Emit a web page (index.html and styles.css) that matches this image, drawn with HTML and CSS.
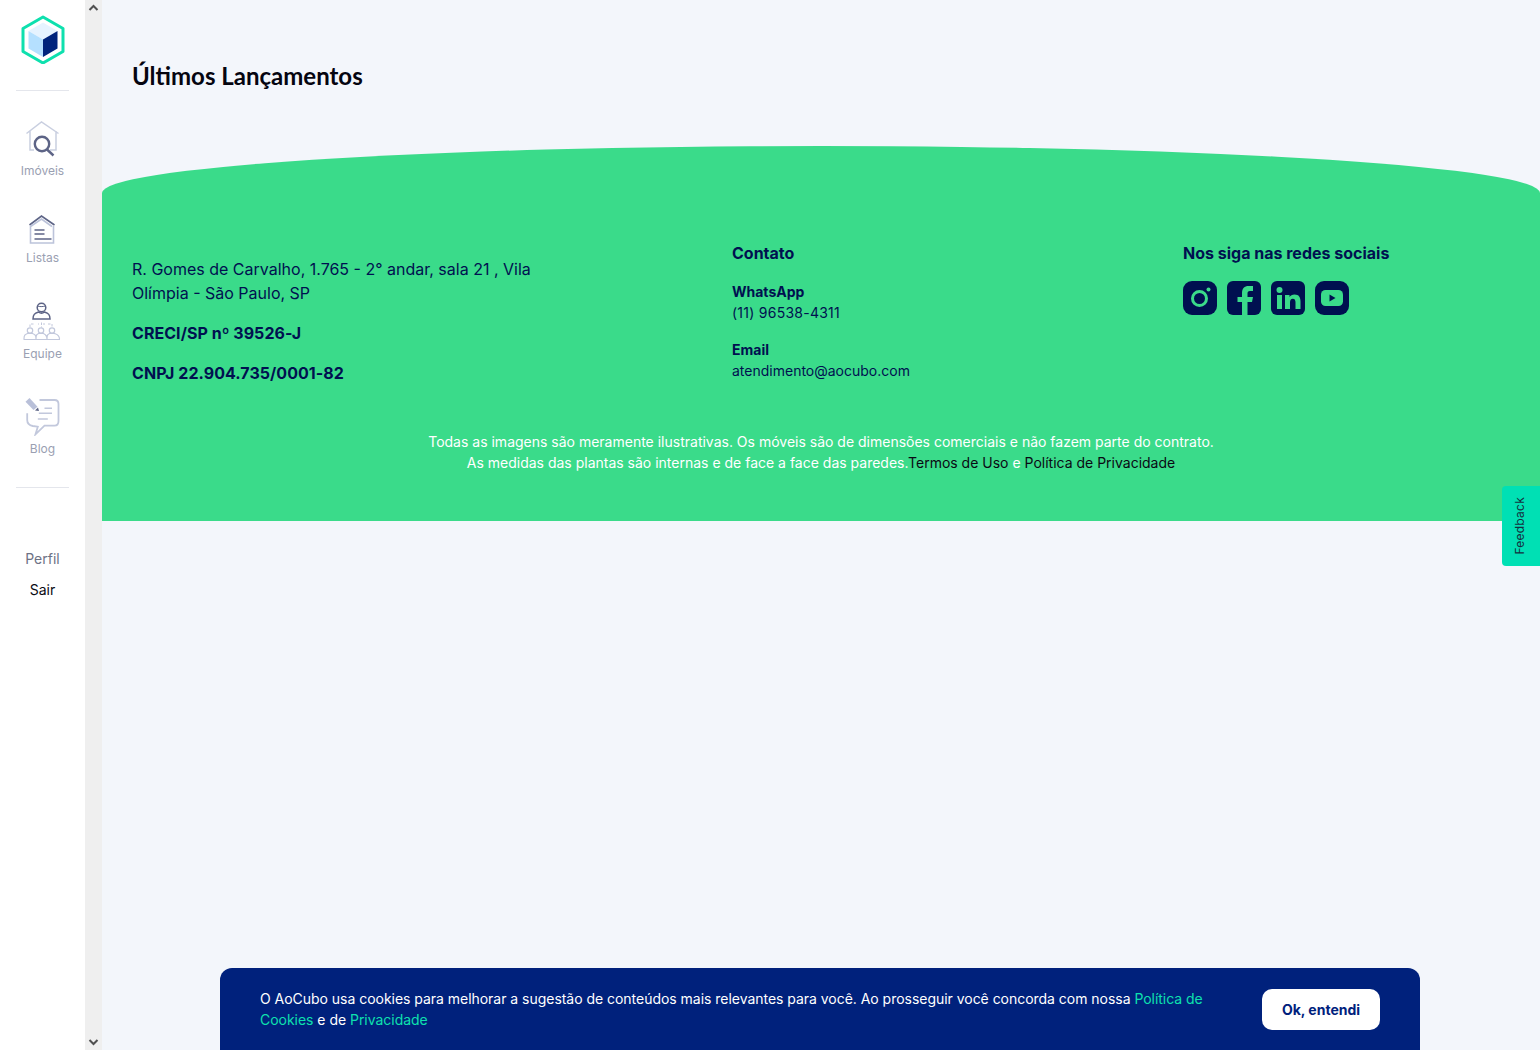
FILE: index.html
```html
<!DOCTYPE html>
<html lang="pt-BR">
<head>
<meta charset="utf-8">
<title>AoCubo</title>
<link rel="stylesheet" href="styles.css">
</head>
<body>
<div class="app">
  <aside class="sidebar">
    <div class="logo">
      <svg width="46" height="50" viewBox="0 0 46 50"><path d="M23 3 43 14.500V37.500L23 49 3 37.500V14.500Z" fill="#fff" stroke="#0ee0ae" stroke-width="3" stroke-linejoin="round"/><path d="M23 8.500 37.500 17 23 25.500 8.500 17Z" fill="#e6f3ff"/><path d="M8.500 17 23 25.500V43L8.500 34.500Z" fill="#b5e0ff"/><path d="M37.500 17V34.500L23 43V25.500Z" fill="#00237c"/></svg>
    </div>
    <hr class="divider">
    <nav class="nav">
      <a class="nav-item">
        <svg width="36" height="38" viewBox="0 0 36 38" fill="none"><path d="M2.500 13.500 17.500 2l17 11.500M6 11v19h4M26 30h6V11" stroke="#c9cfe0" stroke-width="1.500"/><circle cx="18" cy="24" r="7.200" fill="#fff" stroke="#5d6486" stroke-width="2.400"/><path d="M23 29.500l6.500 6" stroke="#5d6486" stroke-width="2.400"/></svg>
        <span>Imóveis</span>
      </a>
      <a class="nav-item">
        <svg width="28" height="30" viewBox="0 0 28 30" fill="none"><path d="M1.500 10 13.500 1l13 9" stroke="#5d6486" stroke-width="1.600"/><path d="M2.500 11.500 13.500 4l10.500 7.500M2.500 11v17h23V11" stroke="#bcc3da" stroke-width="1.600"/><path d="M6.500 15h10M6.500 19h10M6.500 24h17" stroke="#5d6486" stroke-width="1.700"/></svg>
        <span>Listas</span>
      </a>
      <a class="nav-item nav-equipe">
        <svg width="38" height="40" viewBox="0 0 38 40" fill="none"><circle cx="18.500" cy="5.500" r="4.300" stroke="#5d6486" stroke-width="1.500"/><path d="M14.500 4c2 .8 5 .8 8 0" stroke="#5d6486"/><path d="M10 17c0-4.500 1.500-5.500 5.500-7 2 1.500 4 1.500 6 0 4 1.500 5.500 2.500 5.500 7z" stroke="#5d6486" stroke-width="1.500"/><path d="M7 25v-3h5M15 22h1M20 22h2M25 22h4v3M18.500 20.500v5" stroke="#c2c8dc" stroke-dasharray="2.500 1.500"/><g stroke="#c2c8dc" stroke-width="1.200"><circle cx="7" cy="28.500" r="2.700"/><circle cx="18" cy="28.500" r="2.700"/><circle cx="29" cy="28.500" r="2.700"/><path d="M1 37c0-4 1-4.500 3.500-5.500h5c2.500 1 3.500 1.500 3.500 5.500M13 37c0-4 .5-4.500 2.500-5.500h5c2 1 3.500 1.500 3.500 5.500M24 37c0-4 .5-4.500 2.500-5.500h5c2.500 1 5 1.500 5 5.500M.5 37.500h36.500"/></g></svg>
        <span>Equipe</span>
      </a>
      <a class="nav-item nav-blog">
        <svg width="36" height="38" viewBox="0 0 36 38" fill="none"><path d="M1.500 3.700 5.500 0l8 8.700L9.500 12z" fill="#b9c0d9"/><path d="M11 12.500l3-3 1 3.500z" fill="#5d6486"/><path d="M15.500 2h15c2.700 0 4 1.500 4 4v17c0 3-1.500 4.700-4 4.700h-10l-9 8.600 2.300-7.600-5-.7c-3.500-.7-5.600-3-5.600-6v-6.700" stroke="#c2c8dc" stroke-width="1.800"/><path d="M20.500 10.300H28M14.800 15.300H28M13.800 21h10" stroke="#c2c8dc" stroke-width="1.500"/></svg>
        <span>Blog</span>
      </a>
    </nav>
    <hr class="divider">
    <div class="account">
      <a class="account-profile">Perfil</a>
      <a class="account-exit">Sair</a>
    </div>
  </aside>

  <div class="scrollbar">
    <svg class="scroll-arrow" width="17" height="17" viewBox="0 0 17 17" fill="none"><path d="M4.500 10 8.500 6l4 4" stroke="#505050" stroke-width="2"/></svg>
    <svg class="scroll-arrow" width="17" height="17" viewBox="0 0 17 17" fill="none"><path d="M4.500 7l4 4 4-4" stroke="#505050" stroke-width="2"/></svg>
  </div>

  <main class="main">
    <h1 class="title">Últimos Lançamentos</h1>
    <footer class="footer">
      <div class="footer-columns">
        <div class="col-address">
          <p class="address">R. Gomes de Carvalho, 1.765 - 2° andar, sala 21 , Vila Olímpia - São Paulo, SP</p>
          <p class="legal">CRECI/SP nº 39526-J</p>
          <p class="legal">CNPJ 22.904.735/0001-82</p>
        </div>
        <div class="col-contact">
          <h2 class="col-title">Contato</h2>
          <div class="contact-block">
            <strong>WhatsApp</strong>
            <span class="phone">(11) 96538-4311</span>
          </div>
          <div class="contact-block">
            <strong>Email</strong>
            <span>atendimento@aocubo.com</span>
          </div>
        </div>
        <div class="col-social">
          <h2 class="col-title">Nos siga nas redes sociais</h2>
          <div class="social-icons">
            <svg width="34" height="34" viewBox="0 0 34 34"><rect width="34" height="34" rx="9" fill="#001050"/><circle cx="16.500" cy="17.500" r="7" fill="none" stroke="#3adb8a" stroke-width="3"/><circle cx="25.500" cy="8.500" r="2" fill="#3adb8a"/></svg>
            <svg width="34" height="34" viewBox="0 0 34 34"><rect width="34" height="34" rx="6" fill="#001050"/><path d="M15 34V21h-4.500v-5H15v-4c0-4.500 2.500-7 6.500-7H26v5h-3c-2 0-2.500 1-2.500 2.500V16H26l-1 5h-4.500v13z" fill="#3adb8a"/></svg>
            <svg width="34" height="34" viewBox="0 0 34 34"><rect width="34" height="34" rx="6" fill="#001050"/><circle cx="8.500" cy="9" r="3" fill="#3adb8a"/><path d="M6 14h5v14H6zM14 14h4.500v2c1-1.500 2.700-2.500 5-2.500 4.500 0 6 2.800 6 7V28h-5v-6.500c0-2.500-.7-3.800-2.700-3.800-2 0-2.800 1.500-2.800 3.800V28h-5z" fill="#3adb8a"/></svg>
            <svg width="34" height="34" viewBox="0 0 34 34"><rect width="34" height="34" rx="9" fill="#001050"/><rect x="6" y="9" width="22" height="16" rx="4.500" fill="#3adb8a"/><path d="M14.500 13.500 20.500 17l-6 3.500z" fill="#001050"/></svg>
          </div>
        </div>
      </div>
      <div class="disclaimer">
        <p>Todas as imagens são meramente ilustrativas. Os móveis são de dimensões comerciais e não fazem parte do contrato.</p>
        <p>As medidas das plantas são internas e de face a face das paredes.<a>Termos de Uso</a> e <a>Política de Privacidade</a></p>
      </div>
    </footer>
  </main>
</div>

<a class="feedback"><span>Feedback</span></a>

<div class="cookie">
  <p>O AoCubo usa cookies para melhorar a sugestão de conteúdos mais relevantes para você. Ao prosseguir você concorda com nossa <a>Política de Cookies</a> e de <a>Privacidade</a></p>
  <button class="cookie-btn" type="button">Ok, entendi</button>
</div>
</body>
</html>
```

FILE: styles.css
```css
* { box-sizing: border-box; }
html, body { margin: 0; height: 100%; overflow: hidden; }
body { font-family: Inter, "Noto Sans", sans-serif; background: #f3f6fb; color: #001050; }
p, h1, h2 { margin: 0; }

.app { display: flex; height: 1050px; }

.sidebar { width: 85px; flex: none; background: #fff; display: flex; flex-direction: column; align-items: center; }
.logo { height: 90px; padding-top: 14px; }
.logo svg { display: block; }
.divider { width: 53px; height: 1px; border: 0; background: #e4e6ec; margin: 0; flex: none; }

.nav { display: flex; flex-direction: column; align-items: center; gap: 37px; padding-top: 29px; height: 396px; }
.nav-item { display: flex; flex-direction: column; align-items: center; gap: 5px; font-size: 12px; line-height: 15px; color: #9aa0b2; }
.nav-item svg { display: block; }
.nav-equipe { gap: 4px; }

.account { display: flex; flex-direction: column; align-items: center; padding-top: 62px; gap: 14px; font-size: 14px; line-height: 17px; }
.account-profile { color: #6d7285; }
.account-exit { color: #0a0a14; }

.scrollbar { width: 17px; flex: none; background: #efefef; display: flex; flex-direction: column; justify-content: space-between; }
.scroll-arrow { display: block; }

.main { flex: 1; min-width: 0; }
.title { font-family: Lato, sans-serif; font-size: 24px; line-height: 29px; font-weight: 700; color: #050510; padding: 61px 30px 0; height: 146px; }

.footer { height: 375px; background: #3adb8a; border-radius: 719px 719px 0 0 / 47px 47px 0 0; padding: 94px 30px 0; display: flex; flex-direction: column; }
.footer-columns { display: flex; height: 164px; }
.col-address { width: 600px; padding-top: 17px; }
.address { width: 420px; font-size: 16px; line-height: 24px; }
.legal { font-size: 16px; line-height: 24px; font-weight: 700; margin-top: 16px; letter-spacing: .05px; }
.col-contact { width: 451px; }
.col-title { font-size: 16px; line-height: 26px; font-weight: 700; }
.contact-block { display: flex; flex-direction: column; font-size: 14px; line-height: 21px; margin-top: 15px; }
.contact-block + .contact-block { margin-top: 16px; }
.contact-block strong { font-weight: 700; }
.phone { letter-spacing: .25px; }
.social-icons { display: flex; gap: 10px; margin-top: 15px; }
.social-icons svg { display: block; }

.disclaimer { margin-top: 27px; text-align: center; color: #fff; font-size: 14px; line-height: 21px; }
.disclaimer a { color: #0a0a14; }

.feedback { position: fixed; right: 0; top: 486px; width: 38px; height: 80px; background: #00e0b4; border-radius: 4px 0 0 4px; display: flex; align-items: center; justify-content: center; padding-right: 3px; }
.feedback span { writing-mode: vertical-rl; transform: rotate(180deg); font-size: 12px; color: #15303f; letter-spacing: .25px; }

.cookie { position: fixed; left: 220px; top: 968px; width: 1200px; height: 100px; background: #00217c; border-radius: 12px 12px 0 0; padding: 20px 40px 0; display: flex; justify-content: space-between; align-items: flex-start; }
.cookie p { width: 960px; color: #fff; font-size: 14px; line-height: 21px; letter-spacing: -.03px; }
.cookie a { color: #0ee0ae; }
.cookie-btn { width: 118px; height: 41px; margin-top: 1px; border: 0; border-radius: 10px; background: #fff; color: #00217c; font: 700 14px Inter, sans-serif; }
```
